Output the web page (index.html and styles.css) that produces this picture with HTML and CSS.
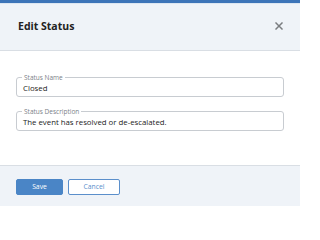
FILE: index.html
```html
<!DOCTYPE html>
<html>
<head>
<meta charset="utf-8">
<link rel="stylesheet" href="styles.css">
</head>
<body>
<div class="modal">
  <div class="modal-header">
    <h1 class="modal-title">Edit Status</h1>
    <button class="close-btn" aria-label="Close">
      <svg width="8" height="8" viewBox="0 0 8 8"><path d="M1 1L7 7M7 1L1 7" stroke="#7a7d80" stroke-width="1.5" stroke-linecap="square"/></svg>
    </button>
  </div>
  <div class="modal-body">
    <fieldset class="field">
      <legend class="field-label">Status Name</legend>
      <div class="field-value">Closed</div>
    </fieldset>
    <fieldset class="field">
      <legend class="field-label">Status Description</legend>
      <div class="field-value">The event has resolved or de-escalated.</div>
    </fieldset>
  </div>
  <div class="modal-footer">
    <button class="btn btn-primary">Save</button>
    <button class="btn btn-secondary">Cancel</button>
  </div>
</div>
</body>
</html>
```
FILE: styles.css
```css
html, body {
  margin: 0;
  padding: 0;
  background: #ffffff;
}
body {
  font-family: "Open Sans", "Liberation Sans", sans-serif;
  width: 300px;
  height: 206px;
  overflow: hidden;
}
.modal {
  display: flex;
  flex-direction: column;
  height: 206px;
  border-top: 3px solid #3c74b8;
  box-sizing: border-box;
}
.modal-header {
  height: 48px;
  box-sizing: border-box;
  background: #eff3f8;
  border-top: 1px solid #dce6f1;
  border-bottom: 1px solid #d9dee4;
  display: flex;
  align-items: center;
  justify-content: space-between;
  padding: 0 17px 2px 18px;
}
.modal-title {
  margin: 0;
  font-size: 10.5px;
  font-weight: 700;
  color: #222;
}
.close-btn {
  border: none;
  background: none;
  padding: 0;
  width: 8px;
  height: 8px;
  display: flex;
}
.modal-body {
  flex: 1;
  padding: 22px 16px 0;
  display: flex;
  flex-direction: column;
  gap: 10px;
}
.field {
  margin: 0;
  padding: 0 6px 2px;
  border: 1px solid #c8ccd1;
  border-radius: 3px;
  min-width: 0;
}
.field-label {
  font-size: 6.5px;
  color: #7b8088;
  padding: 0 2px;
  margin-left: -1px;
  line-height: 9px;
}
.field-value {
  font-size: 7.8px;
  color: #222;
  line-height: 11px;
  padding-top: 1px;
}
.modal-footer {
  height: 41px;
  box-sizing: border-box;
  background: #eff3f8;
  border-top: 1px solid #d9dee4;
  display: flex;
  align-items: flex-start;
  gap: 5px;
  padding: 13px 16px 0;
}
.btn {
  height: 16px;
  box-sizing: border-box;
  border-radius: 2px;
  font-family: "Open Sans", "Liberation Sans", sans-serif;
  font-size: 6.8px;
  padding: 0;
  line-height: 14px;
}
.btn-primary {
  width: 47px;
  background: #4a85c6;
  border: 1px solid #4a85c6;
  color: #fff;
}
.btn-secondary {
  width: 52px;
  background: #fff;
  border: 1px solid #5b8fcb;
  color: #5b8fcb;
}
```
